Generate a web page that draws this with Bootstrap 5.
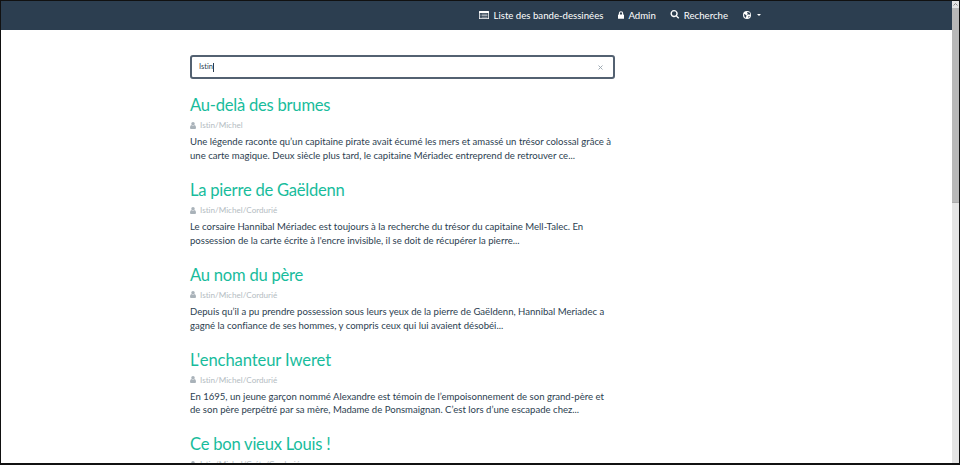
<!DOCTYPE html>
<html lang="fr">
<head>
<meta charset="utf-8">
<title>Recherche</title>
<link href="https://cdn.jsdelivr.net/npm/bootstrap@5.3.0/dist/css/bootstrap.min.css" rel="stylesheet">
<style>
body{font-family:Lato,"Liberation Sans",sans-serif;font-size:9.57px;line-height:13.8px;color:#2c3e50;background:#fff;font-variant-ligatures:none}
.frame{height:465px;border:1px solid #111;border-bottom-width:2px}
.topbar{height:29px;background:#2c3e50;padding:0 191px 2px 0}
.topbar .nav-link{color:#fff;padding:0;display:flex;align-items:center;white-space:nowrap;line-height:14px;font-size:9.65px}
.topbar svg{fill:#fff;flex:none}
.n1 span{margin-left:4px}
.n2{margin-left:15px}
.n2 span,.n3 span{margin-left:4px}
.n3{margin-left:14px}
.n4{margin-left:15px}
.n4 .drop{margin-left:6px}
.main{width:425px;margin-left:189px;padding-top:25px}
.search{height:24px;border:2px solid #536171;border-radius:3px;padding:0 10px 0 7px;font-size:7.5px}
.caret{width:1px;height:9px;background:#2c3e50}
.results{padding-top:16.400px}
.entry{height:84.75px}
.entry h4{font-size:16.6px;letter-spacing:-.24px;line-height:20px;font-weight:400;color:#18bc9c;margin:0 0 4px;white-space:nowrap}
.entry h4.loose{letter-spacing:-.1px}
.meta{font-size:8.12px;line-height:12px;color:#b4bcc2;height:12px;margin-bottom:4px}
.meta svg{fill:#a9b2b9;margin-right:4px}
.entry p{white-space:nowrap;margin:0}
.track{width:7px;background:#e4e4e4}
.thumb{height:195px;background:#b8b8b8;border-bottom:1px solid #aaa}
</style>
<script src="https://cdn.jsdelivr.net/npm/bootstrap@5.3.0/dist/js/bootstrap.bundle.min.js"></script>
</head>
<body class="overflow-hidden">
<div class="frame d-flex overflow-hidden">
<div class="flex-grow-1">
<nav class="topbar d-flex justify-content-end">
<ul class="nav flex-nowrap align-items-center">
<li class="nav-item"><a class="nav-link n1" href="#"><svg width="10" height="8" viewBox="0 0 20 16"><path fill-rule="evenodd" d="M1 0h18q1 0 1 1v14q0 1-1 1H1q-1 0-1-1V1q0-1 1-1zM1.500 4v10.500h17V4z"/><path opacity=".75" d="M3 5.500h2v1.500H3zm3 0h11v1.500H6zM3 8.500h2V10H3zm3 0h11V10H6zm-3 3h2V13H3zm3 0h11V13H6z"/></svg><span>Liste des bande-dessinées</span></a></li>
<li class="nav-item"><a class="nav-link n2" href="#"><svg width="6" height="8" viewBox="0 0 14 18"><path fill-rule="evenodd" d="M2 8V5a5 5 0 0 1 10 0v3h1q1 0 1 1v8q0 1-1 1H1q-1 0-1-1V9q0-1 1-1zm2.500 0h5V5a2.500 2.500 0 0 0-5 0z"/></svg><span>Admin</span></a></li>
<li class="nav-item"><a class="nav-link n3" href="#"><svg width="10" height="9" viewBox="0 0 20 20"><path fill-rule="evenodd" d="M8 0a8 8 0 0 1 6.600 12.500l4.800 4.800-2.200 2.200-4.800-4.800A8 8 0 1 1 8 0zm0 3a5 5 0 1 0 0 10A5 5 0 0 0 8 3z"/></svg><span>Recherche</span></a></li>
<li class="nav-item"><a class="nav-link n4" href="#"><svg width="8" height="8" viewBox="0 0 18 18"><circle cx="9" cy="9" r="9"/><path fill="#2c3e50" d="M10 2l5 1.500 1.500 4-2 1-2-1-2 1.500-1-2 1.500-2-2-1zM2 7l3 1 3 2-1 3-1.500 3-2-3zM12 12l3-1-1 3-2 1z"/></svg><svg class="drop" width="4" height="2" viewBox="0 0 4 2"><path d="M0 0h4L2 2z"/></svg></a></li>
</ul>
</nav>
<main class="main">
<div class="search d-flex align-items-center"><span>Istin</span><span class="caret"></span><svg class="ms-auto" width="5" height="5" viewBox="0 0 5 5"><path d="M.5.5l4 4m0-4l-4 4" stroke="#95a1ab" stroke-width=".9"/></svg></div>
<div class="results">
<article class="entry"><h4>Au-delà des brumes</h4><div class="meta d-flex align-items-center"><svg width="6" height="7" viewBox="0 0 12 14"><circle cx="6" cy="3.500" r="3.500"/><path d="M2.500 6Q6 9 9.500 6 12 7 12 11.500 12 14 10 14H2Q0 14 0 11.500 0 7 2.500 6z"/></svg><span>Istin/Michel</span></div><p>Une légende raconte qu’un capitaine pirate avait écumé les mers et amassé un trésor colossal grâce à<br>une carte magique. Deux siècle plus tard, le capitaine Mériadec entreprend de retrouver ce...</p></article>
<article class="entry"><h4>La pierre de Gaëldenn</h4><div class="meta d-flex align-items-center"><svg width="6" height="7" viewBox="0 0 12 14"><circle cx="6" cy="3.500" r="3.500"/><path d="M2.500 6Q6 9 9.500 6 12 7 12 11.500 12 14 10 14H2Q0 14 0 11.500 0 7 2.500 6z"/></svg><span>Istin/Michel/Cordurié</span></div><p>Le corsaire Hannibal Mériadec est toujours à la recherche du trésor du capitaine Mell-Talec. En<br>possession de la carte écrite à l'encre invisible, il se doit de récupérer la pierre...</p></article>
<article class="entry"><h4>Au nom du père</h4><div class="meta d-flex align-items-center"><svg width="6" height="7" viewBox="0 0 12 14"><circle cx="6" cy="3.500" r="3.500"/><path d="M2.500 6Q6 9 9.500 6 12 7 12 11.500 12 14 10 14H2Q0 14 0 11.500 0 7 2.500 6z"/></svg><span>Istin/Michel/Cordurié</span></div><p>Depuis qu’il a pu prendre possession sous leurs yeux de la pierre de Gaëldenn, Hannibal Meriadec a<br>gagné la confiance de ses hommes, y compris ceux qui lui avaient désobéi...</p></article>
<article class="entry"><h4 class="loose">L'enchanteur Iweret</h4><div class="meta d-flex align-items-center"><svg width="6" height="7" viewBox="0 0 12 14"><circle cx="6" cy="3.500" r="3.500"/><path d="M2.500 6Q6 9 9.500 6 12 7 12 11.500 12 14 10 14H2Q0 14 0 11.500 0 7 2.500 6z"/></svg><span>Istin/Michel/Cordurié</span></div><p>En 1695, un jeune garçon nommé Alexandre est témoin de l’empoisonnement de son grand-père et<br>de son père perpétré par sa mère, Madame de Ponsmaignan. C’est lors d’une escapade chez...</p></article>
<article class="entry"><h4>Ce bon vieux Louis !</h4><div class="meta d-flex align-items-center"><svg width="6" height="7" viewBox="0 0 12 14"><circle cx="6" cy="3.500" r="3.500"/><path d="M2.500 6Q6 9 9.500 6 12 7 12 11.500 12 14 10 14H2Q0 14 0 11.500 0 7 2.500 6z"/></svg><span>Istin/Michel/Créty/Cordurié</span></div></article>
</div>
</main>
</div>
<div class="track flex-shrink-0"><svg class="d-block" width="7" height="7" viewBox="0 0 7 7"><path fill="none" stroke="#888" d="M1.500 4.500l2-2 2 2"/></svg><div class="thumb"></div></div>
</div>
</body>
</html>
